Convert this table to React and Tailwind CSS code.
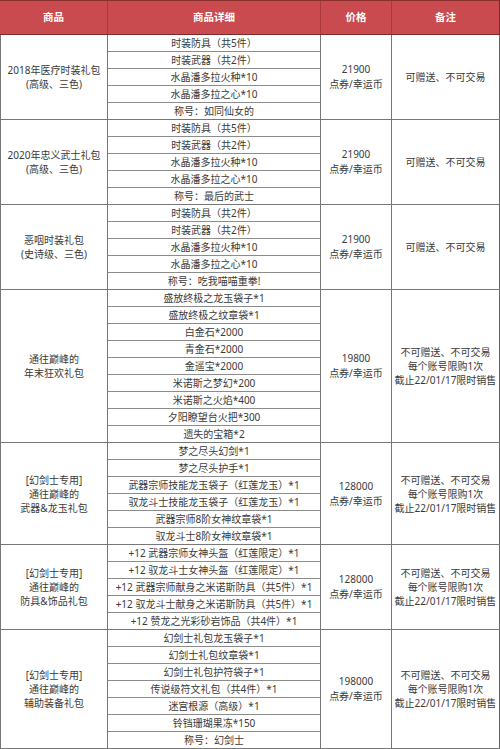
import React from 'react';

const groups = [
    {
        name: ['2018年医疗时装礼包', '(高级、三色)'],
        items: ['时装防具（共5件）', '时装武器（共2件）', '水晶潘多拉火种*10', '水晶潘多拉之心*10', '称号：如同仙女的'],
        price: '21900',
        notes: ['可赠送、不可交易'],
    },
    {
        name: ['2020年忠义武士礼包', '(高级、三色)'],
        items: ['时装防具（共5件）', '时装武器（共2件）', '水晶潘多拉火种*10', '水晶潘多拉之心*10', '称号：最后的武士'],
        price: '21900',
        notes: ['可赠送、不可交易'],
    },
    {
        name: ['恶咽时装礼包', '(史诗级、三色)'],
        items: ['时装防具（共2件）', '时装武器（共2件）', '水晶潘多拉火种*10', '水晶潘多拉之心*10', '称号：吃我喵喵重拳!'],
        price: '21900',
        notes: ['可赠送、不可交易'],
    },
    {
        name: ['通往巅峰的', '年末狂欢礼包'],
        items: [
            '盛放终极之龙玉袋子*1',
            '盛放终极之纹章袋*1',
            '白金石*2000',
            '青金石*2000',
            '金遥宝*2000',
            '米诺斯之梦幻*200',
            '米诺斯之火焰*400',
            '夕阳瞭望台火把*300',
            '遗失的宝箱*2',
        ],
        price: '19800',
        notes: ['不可赠送、不可交易', '每个账号限购1次', '截止22/01/17限时销售'],
    },
    {
        name: ['[幻剑士专用]', '通往巅峰的', '武器&龙玉礼包'],
        items: [
            '梦之尽头幻剑*1',
            '梦之尽头护手*1',
            '武器宗师技能龙玉袋子（红莲龙玉）*1',
            '驭龙斗士技能龙玉袋子（红莲龙玉）*1',
            '武器宗师8阶女神纹章袋*1',
            '驭龙斗士8阶女神纹章袋*1',
        ],
        price: '128000',
        notes: ['不可赠送、不可交易', '每个账号限购1次', '截止22/01/17限时销售'],
    },
    {
        name: ['[幻剑士专用]', '通往巅峰的', '防具&饰品礼包'],
        items: [
            '+12 武器宗师女神头盔（红莲限定）*1',
            '+12 驭龙斗士女神头盔（红莲限定）*1',
            '+12 武器宗师献身之米诺斯防具（共5件）*1',
            '+12 驭龙斗士献身之米诺斯防具（共5件）*1',
            '+12 赞龙之光彩砂岩饰品（共4件）*1',
        ],
        price: '128000',
        notes: ['不可赠送、不可交易', '每个账号限购1次', '截止22/01/17限时销售'],
    },
    {
        name: ['[幻剑士专用]', '通往巅峰的', '辅助装备礼包'],
        items: [
            '幻剑士礼包龙玉袋子*1',
            '幻剑士礼包纹章袋*1',
            '幻剑士礼包护符袋子*1',
            '传说级符文礼包（共4件）*1',
            '迷宫根源（高级）*1',
            '铃铛珊瑚果冻*150',
            '称号：幻剑士',
        ],
        price: '198000',
        notes: ['不可赠送、不可交易', '每个账号限购1次', '截止22/01/17限时销售'],
    },
];

// latin glyphs from Noto Sans are wider, closer to the screenshot
const font = { fontFamily: '"Noto Sans", "Noto Sans CJK SC", sans-serif' };

const App = () => {
    return (
        <div className="w-[500px] bg-white text-[10px] text-[#3a3a3a]" style={font}>
            {/* header */}
            <div className="flex h-[35px] bg-[#c94a4f] border-t border-b border-t-[#8a2e2e] border-b-[#7d2c2c] text-white font-bold text-[10.5px]">
                <div className="w-[108px] flex items-center justify-center border-r border-[#a83a3e]">商品</div>
                <div className="w-[213px] flex items-center justify-center border-r border-[#a83a3e]">商品详细</div>
                <div className="w-[71px] flex items-center justify-center border-r border-[#a83a3e]">价格</div>
                <div className="w-[108px] flex items-center justify-center border-r border-[#7d2c2c]">备注</div>
            </div>

            {groups.map((g, gi) => (
                <div key={gi} className="flex border-b border-[#777]">
                    <div className="w-[108px] flex flex-col items-center justify-center border-l border-r border-[#777] leading-[14px] text-center">
                        {g.name.map((line, i) => (
                            <div key={i}>{line}</div>
                        ))}
                    </div>
                    <div className="w-[213px] flex flex-col border-r border-[#777]">
                        {g.items.map((item, i) => (
                            <div
                                key={i}
                                className={`flex items-center justify-center whitespace-nowrap leading-[16px] ${i === 0 ? 'h-[16px]' : 'h-[17px] border-t border-[#8c8c8c]'}`}
                            >
                                {item}
                            </div>
                        ))}
                    </div>
                    <div className="w-[71px] flex flex-col items-center justify-center border-r border-[#777] leading-[15px] text-center">
                        <div>{g.price}</div>
                        <div>点券/幸运币</div>
                    </div>
                    <div className="w-[108px] flex flex-col items-center justify-center border-r border-[#666] leading-[14px] text-center whitespace-nowrap">
                        {g.notes.map((line, i) => (
                            <div key={i}>{line}</div>
                        ))}
                    </div>
                </div>
            ))}
        </div>
    );
};

export default App;
